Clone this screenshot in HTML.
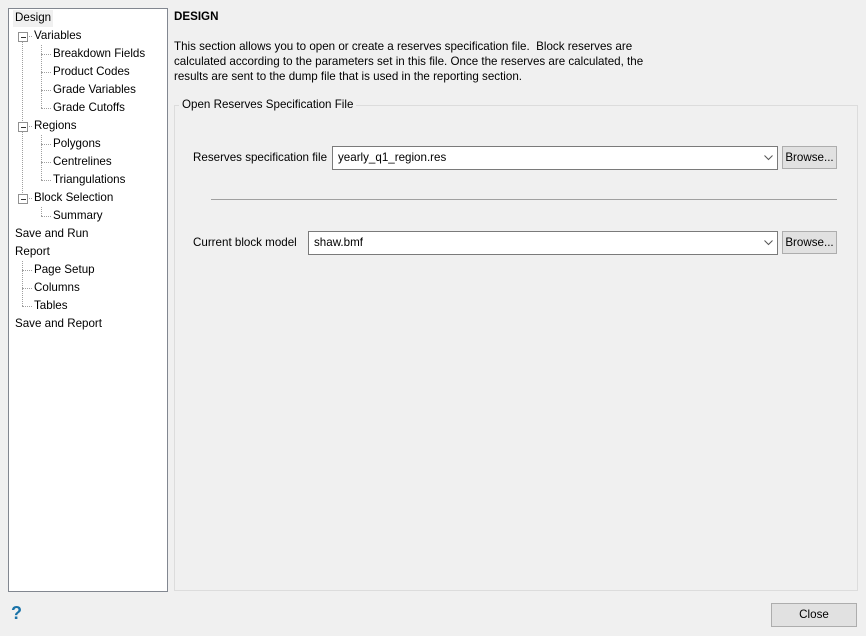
<!DOCTYPE html><html><head><style>
body{margin:0;width:866px;height:636px;background:#f0f0f0;font-family:"Liberation Sans",sans-serif;font-size:11.6px;color:#000;position:relative;overflow:hidden}
.a{position:absolute;white-space:nowrap}
.t{position:absolute;white-space:nowrap;line-height:18px;height:18px}
.v{position:absolute;border-left:1px dotted #a0a0a0;width:0}
.h{position:absolute;border-top:1px dotted #a0a0a0;height:0}
.bx{position:absolute;width:8px;height:8px;border:1px solid #919191;background:#fff}
.bx:after{content:"";position:absolute;left:2px;top:4px;width:5px;border-top:1px solid #333}
.combo{position:absolute;background:#fff;border:1px solid #7a7a7a;box-sizing:border-box;height:24px;line-height:22px;padding-left:5px}
.combo svg{position:absolute;right:4px;top:8px}
.btn{position:absolute;background:#e1e1e1;border:1px solid #adadad;box-sizing:border-box;text-align:center}
</style></head><body>
<div class="a" style="left:8px;top:8px;width:160px;height:584px;background:#fff;border:1px solid #828790;box-sizing:border-box"></div>
<div class="a" style="left:13px;top:10px;width:40px;height:17px;background:#f0f0f0"></div>
<div class="v" style="left:22px;top:36px;height:163px"></div>
<div class="v" style="left:41px;top:45px;height:63px"></div>
<div class="v" style="left:41px;top:135px;height:45px"></div>
<div class="v" style="left:41px;top:207px;height:9px"></div>
<div class="v" style="left:22px;top:261px;height:45px"></div>
<div class="h" style="left:27px;top:36px;width:5px"></div>
<div class="h" style="left:27px;top:126px;width:5px"></div>
<div class="h" style="left:27px;top:198px;width:5px"></div>
<div class="h" style="left:41px;top:54px;width:10px"></div>
<div class="h" style="left:41px;top:72px;width:10px"></div>
<div class="h" style="left:41px;top:90px;width:10px"></div>
<div class="h" style="left:41px;top:108px;width:10px"></div>
<div class="h" style="left:41px;top:144px;width:10px"></div>
<div class="h" style="left:41px;top:162px;width:10px"></div>
<div class="h" style="left:41px;top:180px;width:10px"></div>
<div class="h" style="left:41px;top:216px;width:10px"></div>
<div class="h" style="left:22px;top:270px;width:10px"></div>
<div class="h" style="left:22px;top:288px;width:10px"></div>
<div class="h" style="left:22px;top:306px;width:10px"></div>
<div class="bx" style="left:18px;top:32px"></div>
<div class="bx" style="left:18px;top:122px"></div>
<div class="bx" style="left:18px;top:194px"></div>
<div class="t" style="left:15px;top:9px">Design</div>
<div class="t" style="left:34px;top:27px">Variables</div>
<div class="t" style="left:53px;top:45px">Breakdown Fields</div>
<div class="t" style="left:53px;top:63px">Product Codes</div>
<div class="t" style="left:53px;top:81px">Grade Variables</div>
<div class="t" style="left:53px;top:99px">Grade Cutoffs</div>
<div class="t" style="left:34px;top:117px">Regions</div>
<div class="t" style="left:53px;top:135px">Polygons</div>
<div class="t" style="left:53px;top:153px">Centrelines</div>
<div class="t" style="left:53px;top:171px">Triangulations</div>
<div class="t" style="left:34px;top:189px">Block Selection</div>
<div class="t" style="left:53px;top:207px">Summary</div>
<div class="t" style="left:15px;top:225px">Save and Run</div>
<div class="t" style="left:15px;top:243px">Report</div>
<div class="t" style="left:34px;top:261px">Page Setup</div>
<div class="t" style="left:34px;top:279px">Columns</div>
<div class="t" style="left:34px;top:297px">Tables</div>
<div class="t" style="left:15px;top:315px">Save and Report</div>

<div class="a" style="left:174px;top:9px;font-weight:bold;line-height:16px">DESIGN</div>
<div class="a" style="left:174px;top:39px;line-height:15px">This section allows you to open or create a reserves specification file.&nbsp; Block reserves are<br>calculated according to the parameters set in this file. Once the reserves are calculated, the<br>results are sent to the dump file that is used in the reporting section.</div>
<div class="a" style="left:174px;top:105px;width:684px;height:486px;border:1px solid #dcdcdc;box-sizing:border-box"></div>
<div class="a" style="left:179px;top:97px;background:#f0f0f0;padding:0 3px;line-height:16px">Open Reserves Specification File</div>
<div class="a" style="left:193px;top:150px;line-height:16px">Reserves specification file</div>
<div class="combo" style="left:332px;top:146px;width:446px">yearly_q1_region.res<svg width="9" height="6"><path d="M0.5 0.5L4.5 4.5L8.5 0.5" fill="none" stroke="#555"/></svg></div>
<div class="btn" style="left:782px;top:146px;width:55px;height:23px;line-height:21px">Browse...</div>
<div class="a" style="left:211px;top:199px;width:626px;height:1px;background:#a0a0a0"></div>
<div class="a" style="left:193px;top:235px;line-height:16px">Current block model</div>
<div class="combo" style="left:308px;top:231px;width:470px">shaw.bmf<svg width="9" height="6"><path d="M0.5 0.5L4.5 4.5L8.5 0.5" fill="none" stroke="#555"/></svg></div>
<div class="btn" style="left:782px;top:231px;width:55px;height:23px;line-height:21px">Browse...</div>
<div class="a" style="left:11px;top:603px;font-weight:bold;font-size:18px;color:#1a73a8">?</div>
<div class="btn" style="left:771px;top:603px;width:86px;height:24px;line-height:22px">Close</div>
</body></html>
